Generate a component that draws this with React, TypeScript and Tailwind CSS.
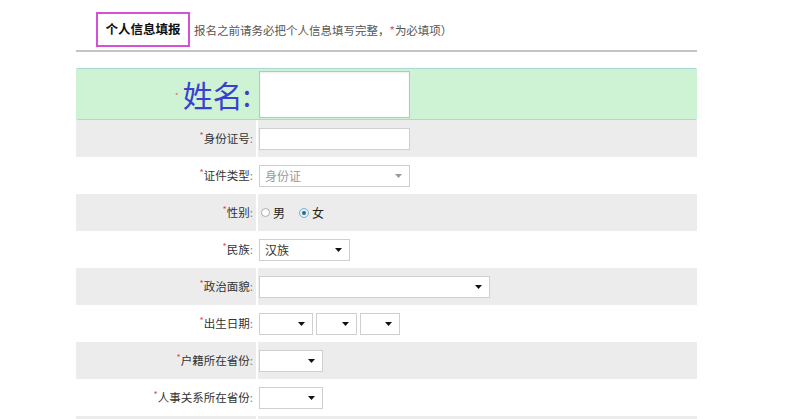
import React from 'react';

const font = "font-['Noto_Sans_CJK_SC','Noto_Sans',sans-serif]";

function Caret({ light }: { light?: boolean }) {
  return (
    <svg width="7" height="4" viewBox="0 0 7 4" className="shrink-0">
      <path d="M0 0 L7 0 L3.5 4 Z" fill={light ? '#9a9a9a' : '#111'} />
    </svg>
  );
}

function Select({ w, text, light }: { w: number; text?: string; light?: boolean }) {
  return (
    <div
      className="h-[22px] bg-white border border-[#cfcfcf] flex items-center justify-between pl-[5px] pr-[7px] text-[12px] text-[#333]"
      style={{ width: w }}
    >
      <span className={light ? 'text-[#999]' : ''}>{text}</span>
      <Caret light={light} />
    </div>
  );
}

function Row({ label, gray, children }: { label?: string; gray?: boolean; children?: React.ReactNode }) {
  return (
    <div className={`flex h-[37px] ${gray ? 'bg-[#ececec]' : 'bg-white'}`}>
      <div className="w-[180px] flex items-center justify-end pr-[3px] text-[11.5px] text-[#333]">
        {label && (
          <>
            <span className="text-[#e24a4a] text-[9px] -translate-y-[3px]">*</span>
            <span>{label}</span>
            <span className="text-[#888]">:</span>
          </>
        )}
      </div>
      <div className={`w-[2px] ${gray ? 'bg-white' : ''}`} />
      <div className="flex-1 flex items-center pl-[1px] gap-[3px]">{children}</div>
    </div>
  );
}

export default function App() {
  return (
    <div className={`w-[785px] h-[419px] bg-white overflow-hidden ${font}`}>
      <div className="ml-[76px] w-[621px]">
        <div className="flex items-end h-[47px] pl-[20px]">
          <div className="border-2 border-[#d64fd8] h-[35px] w-[94px] flex items-center justify-center text-[12.5px] font-bold text-[#111]">
            个人信息填报
          </div>
          <div className="text-[11.5px] text-[#555] ml-[4px] mb-[8px]">
            报名之前请务必把个人信息填写完整，<span className="text-[#e24a4a]">*</span>为必填项）
          </div>
        </div>
        <div className="h-[2px] bg-[#c4c4c4] mt-[3px]" />
        <div className="h-[16px]" />
        <div className="flex h-[52px] bg-[#cef3d4] border-y border-[#a9d9d6] rounded-[2px]">
          <div className="w-[180px] flex items-center justify-end pr-[5px] text-[#3b3fcf] text-[30px] leading-none">
            <span className="text-[#e08a8a] text-[10px] mr-[1px]">·</span>
            <span>姓名:</span>
          </div>
          <div className="flex items-center pl-[3px]">
            <div className="w-[151px] h-[47px] bg-white border border-[#b9c4c4] shadow-[inset_0_1px_2px_rgba(0,0,0,0.08)]" />
          </div>
        </div>
        <Row label="身份证号" gray>
          <div className="w-[151px] h-[22px] bg-white border border-[#cfcfcf]" />
        </Row>
        <Row label="证件类型">
          <Select w={151} text="身份证" light />
        </Row>
        <Row label="性别" gray>
          <div className="flex items-center text-[12px] text-[#222]">
            <span className="w-[9px] h-[9px] rounded-full border border-[#aaa] bg-white ml-[2px] mr-[3px]" />
            <span>男</span>
            <span className="w-[10px] h-[10px] rounded-full border border-[#7fb0c8] bg-[#dff0f8] ml-[14px] mr-[3px] flex items-center justify-center">
              <span className="w-[4px] h-[4px] rounded-full bg-[#2d6a8a]" />
            </span>
            <span>女</span>
          </div>
        </Row>
        <Row label="民族">
          <Select w={91} text="汉族" />
        </Row>
        <Row label="政治面貌" gray>
          <Select w={231} />
        </Row>
        <Row label="出生日期">
          <Select w={54} />
          <Select w={41} />
          <Select w={40} />
        </Row>
        <Row label="户籍所在省份" gray>
          <Select w={64} />
        </Row>
        <Row label="人事关系所在省份">
          <Select w={64} />
        </Row>
        <Row gray />
      </div>
    </div>
  );
}
